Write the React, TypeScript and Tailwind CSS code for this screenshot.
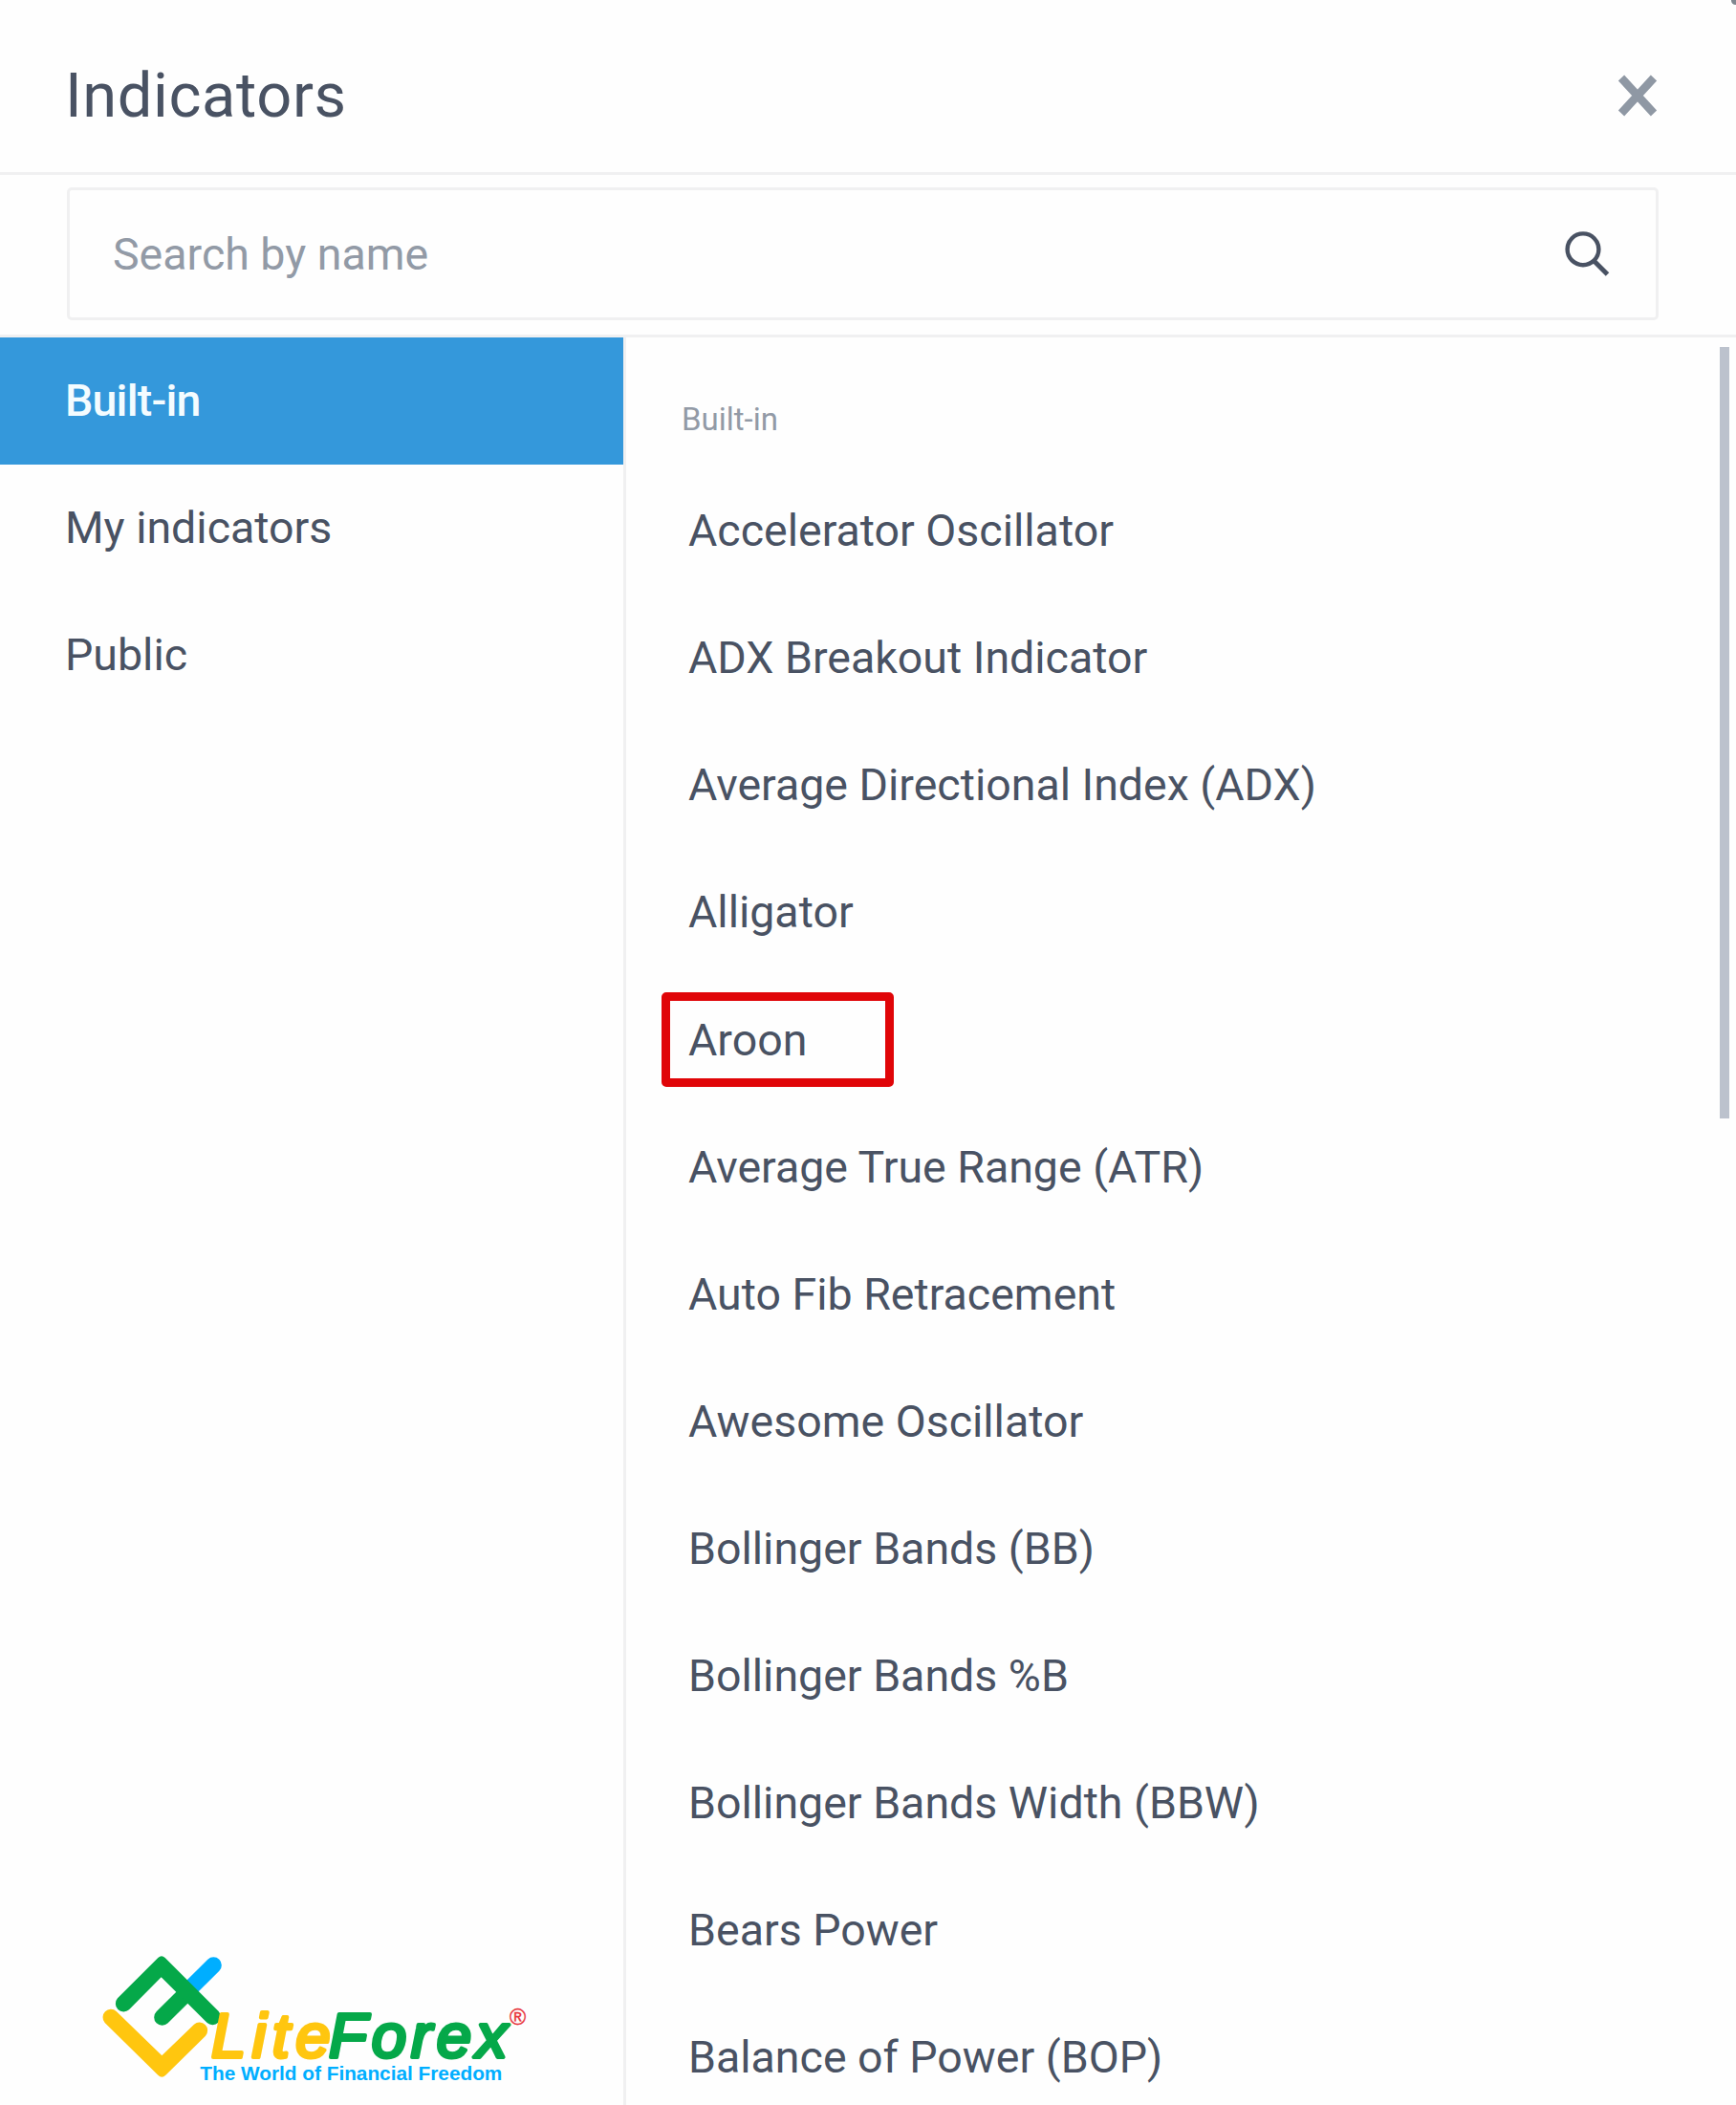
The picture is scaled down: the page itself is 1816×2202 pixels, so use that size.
import React from 'react';

interface IndicatorItem {
  name: string;
  highlighted?: boolean;
}

const CATEGORIES: string[] = ['Built-in', 'My indicators', 'Public'];

const INDICATORS: IndicatorItem[] = [
  { name: 'Accelerator Oscillator' },
  { name: 'ADX Breakout Indicator' },
  { name: 'Average Directional Index (ADX)' },
  { name: 'Alligator' },
  { name: 'Aroon', highlighted: true },
  { name: 'Average True Range (ATR)' },
  { name: 'Auto Fib Retracement' },
  { name: 'Awesome Oscillator' },
  { name: 'Bollinger Bands (BB)' },
  { name: 'Bollinger Bands %B' },
  { name: 'Bollinger Bands Width (BBW)' },
  { name: 'Bears Power' },
  { name: 'Balance of Power (BOP)' },
];

const CloseIcon: React.FC = () => (
  <svg width="44" height="44" viewBox="0 0 44 44" fill="none" stroke="#8f98a4" strokeWidth="8.5">
    <path d="M5 3.5 L39 40.5 M39 3.5 L5 40.5" />
  </svg>
);

const SearchIcon: React.FC = () => (
  <svg width="48" height="48" viewBox="0 0 48 48" fill="none" stroke="#495263" strokeWidth="4.4">
    <circle cx="20" cy="18.8" r="16.4" />
    <path d="M31 30.5 L45.5 45" strokeWidth="5" />
  </svg>
);

const Logo: React.FC = () => (
  <svg width="480" height="172" viewBox="0 0 1440 516">
    {/* Mark */}
    <path d="M400 77 L320 157" stroke="#00aeff" strokeWidth="51" strokeLinecap="round" />
    <path d="M239 241 L310 170" stroke="#05a849" strokeWidth="51" strokeLinecap="round" />
    <path
      fill="#05a849"
      d="M99 181 L226 54 Q237 43 248 54 L416 222 A25.5 25.5 0 0 1 380 258 L236 115 L135 217 A25.5 25.5 0 0 1 99 181 Z"
    />
    <path
      fill="#ffc60f"
      d="M95 222 L238 361 L339 263 A25.5 25.5 0 0 1 375 299 L250 422 Q238 434 226 422 L59 258 A25.5 25.5 0 0 1 95 222 Z"
    />

    {/* Word mark */}
    <g fontFamily="Liberation Sans, Arial, sans-serif">
      <g fontStyle="italic" fontSize="196" strokeWidth="12" strokeLinejoin="round">
        <text x="393" y="366" textLength="374" fill="#ffc60f" stroke="#ffc60f">
          Lite
        </text>
        <text x="762" y="366" textLength="560" fill="#05a849" stroke="#05a849">
          Forex
        </text>
      </g>
      <text
        x="358"
        y="437"
        fontSize="58"
        fontWeight="bold"
        textLength="948"
        lengthAdjust="spacingAndGlyphs"
        fill="#00aeff"
      >
        The World of Financial Freedom
      </text>
      <text x="1329" y="265" fontSize="70" textLength="54" fill="#e8333a" stroke="#e8333a">
        ®
      </text>
    </g>
  </svg>
);

export default function App() {
  const active = 'Built-in';

  return (
    <div className="relative flex h-[2202px] w-[1816px] flex-col overflow-hidden bg-[#fefefe] font-['Roboto',sans-serif] text-[#495263]">
      {/* Header */}
      <header className="flex h-[183px] shrink-0 items-center justify-between border-b-3 border-[#f0f0f1] pr-[81px] pl-[68px]">
        <h1 className="mt-[20px] text-[65px] leading-[80px] tracking-[0.6px]">Indicators</h1>
        <button className="mt-[20px]" aria-label="Close">
          <CloseIcon />
        </button>
      </header>

      {/* Search */}
      <div className="h-[170px] shrink-0 border-b-3 border-[#f0f0f1] pt-[13px] pr-[81px] pl-[70px]">
        <div className="flex h-[139px] items-center justify-between rounded-[5px] border-3 border-[#f0f0f1] pr-[48px] pl-[45px]">
          <span className="text-[46.5px] leading-[54px] text-[#929aa6]">Search by name</span>
          <SearchIcon />
        </div>
      </div>

      <div className="flex min-h-0 flex-1">
        {/* Categories */}
        <aside className="flex w-[655px] shrink-0 flex-col justify-between border-r-3 border-[#f0f0f1]">
          <nav>
            {CATEGORIES.map((category) => (
              <div
                key={category}
                className={
                  category === active
                    ? 'flex h-[133px] items-center bg-[#3498db] pl-[68px] text-[46.5px] font-medium tracking-[-0.8px] text-[#f4fcff]'
                    : 'flex h-[133px] items-center pl-[68px] text-[46.5px]'
                }
              >
                {category}
              </div>
            ))}
          </nav>
          <div className="pl-[90px]">
            <Logo />
          </div>
        </aside>

        {/* Indicator list */}
        <main className="min-w-0 flex-1 pl-[58px]">
          <h2 className="flex h-[136.5px] items-center pt-[35px] text-[33px] text-[#929aa6]">Built-in</h2>
          <ul>
            {INDICATORS.map((item) => (
              <li key={item.name} className="relative flex h-[133.1px] items-center pl-[7px] text-[46.5px] whitespace-nowrap">
                {item.name}
                {item.highlighted && (
                  <span className="absolute top-[16.5px] left-[-21px] h-[99px] w-[243px] rounded-[5px] border-[9px] border-[#e00508]" />
                )}
              </li>
            ))}
          </ul>
        </main>

        {/* Scrollbar */}
        <div className="w-[17px] shrink-0 pt-[10px]">
          <div className="h-[807px] w-[10px] bg-[#bcc2cd]" />
        </div>
      </div>

      <span className="absolute -top-[4px] -right-[4px] size-[9px] rounded-full bg-[#808790]" />
    </div>
  );
}
